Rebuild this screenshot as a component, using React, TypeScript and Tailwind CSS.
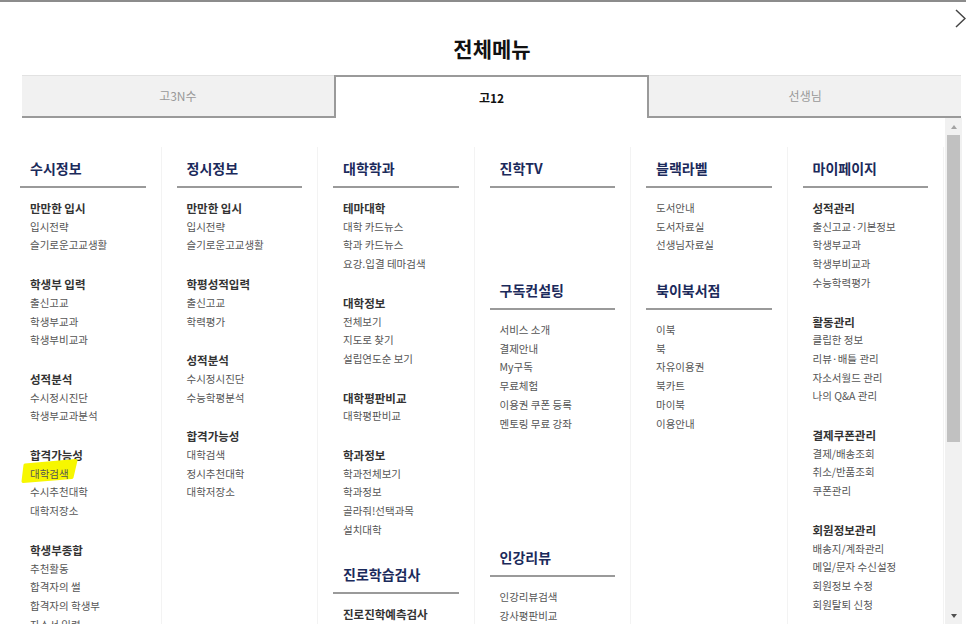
import React from 'react';

type Item = string | { label: string; mark?: boolean };
type Group = { title?: string; items: Item[] };
type Section = { title: string; groups: Group[]; className?: string };

const columns: Section[][] = [
  [
    {
      title: '수시정보',
      groups: [
        { title: '만만한 입시', items: ['입시전략', '슬기로운고교생활'] },
        { title: '학생부 입력', items: ['출신고교', '학생부교과', '학생부비교과'] },
        { title: '성적분석', items: ['수시정시진단', '학생부교과분석'] },
        { title: '합격가능성', items: [{ label: '대학검색', mark: true }, '수시추천대학', '대학저장소'] },
        { title: '학생부종합', items: ['추천활동', '합격자의 썰', '합격자의 학생부', '자소서 입력'] },
      ],
    },
  ],
  [
    {
      title: '정시정보',
      groups: [
        { title: '만만한 입시', items: ['입시전략', '슬기로운고교생활'] },
        { title: '학평성적입력', items: ['출신고교', '학력평가'] },
        { title: '성적분석', items: ['수시정시진단', '수능학평분석'] },
        { title: '합격가능성', items: ['대학검색', '정시추천대학', '대학저장소'] },
      ],
    },
  ],
  [
    {
      title: '대학학과',
      className: 'mb-[22px]',
      groups: [
        { title: '테마대학', items: ['대학 카드뉴스', '학과 카드뉴스', '요강.입결 테마검색'] },
        { title: '대학정보', items: ['전체보기', '지도로 찾기', '설립연도순 보기'] },
        { title: '대학평판비교', items: ['대학평판비교'] },
        { title: '학과정보', items: ['학과전체보기', '학과정보', '골라줘!선택과목', '설치대학'] },
      ],
    },
    {
      title: '진로학습검사',
      groups: [{ title: '진로진학예측검사', items: [] }],
    },
  ],
  [
    { title: '진학TV', className: 'h-[122px]', groups: [] },
    {
      title: '구독컨설팅',
      className: 'h-[267px]',
      groups: [{ items: ['서비스 소개', '결제안내', 'My구독', '무료체험', '이용권 쿠폰 등록', '멘토링 무료 강좌'] }],
    },
    { title: '인강리뷰', groups: [{ items: ['인강리뷰검색', '강사평판비교'] }] },
  ],
  [
    { title: '블랙라벨', className: 'h-[122px]', groups: [{ items: ['도서안내', '도서자료실', '선생님자료실'] }] },
    { title: '북이북서점', groups: [{ items: ['이북', '북', '자유이용권', '북카트', '마이북', '이용안내'] }] },
  ],
  [
    {
      title: '마이페이지',
      groups: [
        { title: '성적관리', items: ['출신고교·기본정보', '학생부교과', '학생부비교과', '수능학력평가'] },
        { title: '활동관리', items: ['클립한 정보', '리뷰·배틀 관리', '자소서월드 관리', '나의 Q&A 관리'] },
        { title: '결제쿠폰관리', items: ['결제/배송조회', '취소/반품조회', '쿠폰관리'] },
        { title: '회원정보관리', items: ['배송지/계좌관리', '메일/문자 수신설정', '회원정보 수정', '회원탈퇴 신청'] },
      ],
    },
  ],
];

const tabs = ['고3N수', '고12', '선생님'];

function MenuItem({ item }: { item: Item }) {
  const label = typeof item === 'string' ? item : item.label;
  const mark = typeof item !== 'string' && item.mark;
  return (
    <li className="text-[10.5px] leading-[18.7px] text-[#555]">
      {mark ? (
        <span className="relative inline-block">
          {/* marker stroke */}
          <svg className="absolute left-[-9px] top-[-6px]" width="58" height="26" viewBox="0 0 58 26">
            <path d="M4 6 L55 1.5 L51 18.5 L2 22.5 Z" fill="#f7f700" stroke="#f7f700" strokeWidth="3" strokeLinejoin="round" />
          </svg>
          <span className="relative">{label}</span>
        </span>
      ) : (
        label
      )}
    </li>
  );
}

function MenuSection({ section }: { section: Section }) {
  return (
    <div className={section.className}>
      <h3 className="border-b-2 border-[#9a9a9a] pb-[6px] pl-[10px] text-[14px] font-bold leading-[24px] text-[#1b2a5b]">
        {section.title}
      </h3>
      <div className="flex flex-col gap-5 pl-[10px] pt-[11px]">
        {section.groups.map((g, i) => (
          <div key={i}>
            {g.title && <p className="text-[11.5px] font-bold leading-[18.7px] text-[#333]">{g.title}</p>}
            <ul>
              {g.items.map((it, j) => (
                <MenuItem key={j} item={it} />
              ))}
            </ul>
          </div>
        ))}
      </div>
    </div>
  );
}

export default function App() {
  return (
    <div className="relative h-[624px] w-[966px] overflow-hidden border-t-2 border-[#8c8c8c] bg-white font-['Noto_Sans_CJK_KR','Noto_Sans',sans-serif]">
      {/* close chevron */}
      <svg className="absolute left-[950px] top-[4px]" width="18" height="26" viewBox="0 0 18 26">
        <polyline points="6,4 15,12.5 6,21" fill="none" stroke="#444" strokeWidth="1.5" />
      </svg>

      <h1 className="pl-[18px] pt-[32px] text-center text-[21px] font-bold leading-[28px] text-[#111]">전체메뉴</h1>

      {/* tabs */}
      <div className="ml-[22px] mt-[13px] flex h-[43px] w-[939px]">
        {tabs.map((t) =>
          t === '고12' ? (
            <div
              key={t}
              className="flex flex-1 items-center justify-center border-x-2 border-t-2 border-[#9a9a9a] bg-white text-[12px] font-bold text-[#111]"
            >
              {t}
            </div>
          ) : (
            <div
              key={t}
              className="flex flex-1 items-center justify-center border-b-2 border-t border-b-[#9a9a9a] border-t-[#e2e2e2] bg-[#f1f1f1] text-[12px] text-[#999]"
            >
              {t}
            </div>
          )
        )}
      </div>

      <div className="flex h-[506px]">
        <div className="w-[945px] overflow-hidden pl-[5px] pt-[29px]">
          <div className="grid h-[700px] w-[939px] grid-cols-6">
            {columns.map((col, i) => (
              <div key={i} className="border-r border-[#f3f3f3] px-[15px] pt-[9px]">
                {col.map((s, j) => (
                  <MenuSection key={j} section={s} />
                ))}
              </div>
            ))}
          </div>
        </div>

        {/* scrollbar */}
        <div className="flex w-[17px] flex-col bg-[#f1f1f1]">
          <div className="flex h-[17px] items-center justify-center">
            <div className="h-0 w-0 border-x-[3.5px] border-b-[4px] border-x-transparent border-b-[#a3a3a3]" />
          </div>
          <div className="mx-[2px] h-[307px] bg-[#c1c1c1]" />
          <div className="flex-1" />
          <div className="flex h-[17px] items-center justify-center">
            <div className="h-0 w-0 border-x-[3.5px] border-t-[4px] border-x-transparent border-t-[#505050]" />
          </div>
        </div>
      </div>
    </div>
  );
}
